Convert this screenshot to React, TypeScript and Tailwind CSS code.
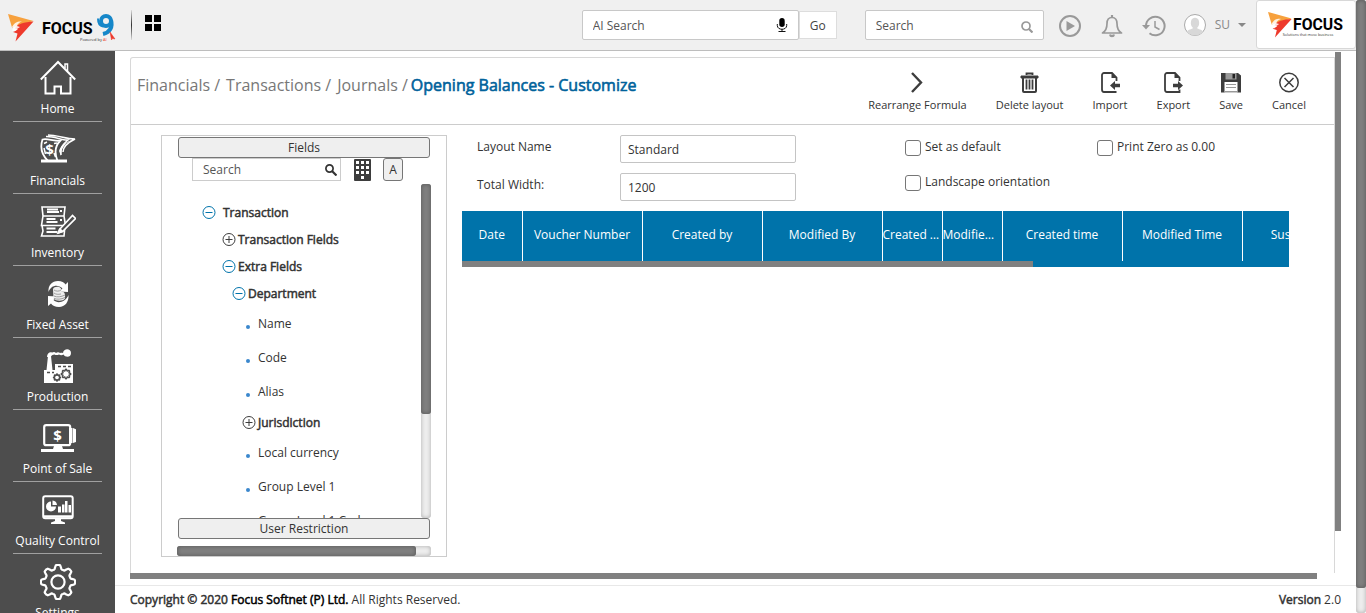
import type { ReactNode } from 'react';

function FocusMark() {
  return (
    <g>
      <path d="M0 1 25.500 8 4 14.500Z" fill="#f7a13d" />
      <path d="M25.500 8.500 7.500 28.500l2-8-4.500-1.500 5-2.500-3-1C9 11 16 9 25.500 8.500Z" fill="#ee3a2c" />
      <path d="M4 14c2.500-5 6-6 10-5.500-3 1-4.500 2.500-5 4.500l3 1-3 2-1.500 3-3.500-1.500 1.500-3Z" fill="#fff" fillOpacity=".85" />
      <path d="m6 18.500 5.500-2-1 4Z" fill="#ee3a2c" />
    </g>
  );
}

function Dollar({ x, y, size, fill }: { x: number; y: number; size: number; fill: string }) {
  return (
    <text x={x} y={y} fontSize={size} fontWeight="700" fill={fill} textAnchor="middle" fontFamily="Open Sans">
      $
    </text>
  );
}

function Gear({ cx, cy, r, depth, stroke, width, hole }: { cx: number; cy: number; r: number; depth: number; stroke: string; width: number; hole: number }) {
  const points: string[] = [];
  for (let i = 0; i <= 96; i++) {
    const a = (i / 96) * Math.PI * 2 - Math.PI / 2;
    const wave = Math.max(-1, Math.min(1, Math.cos(8 * (a + Math.PI / 2)) * 1.7));
    const d = r + wave * depth;
    points.push(`${(cx + Math.cos(a) * d).toFixed(2)},${(cy + Math.sin(a) * d).toFixed(2)}`);
  }
  return (
    <g fill="none" stroke={stroke} strokeWidth={width} strokeLinejoin="round">
      <polygon points={points.join(' ')} />
      <circle cx={cx} cy={cy} r={hole} />
    </g>
  );
}

const icons: Record<string, ReactNode> = {
  Home: (
    <g fill="none" stroke="#fff" strokeWidth="2">
      <path d="M.8 19.500 18 2l17.200 17.500" />
      <path d="M5.500 17v16.500h9V26.500h6.500v7h9.500V17" />
      <path d="M25 8V4h2.500v7" strokeWidth="1.500" />
    </g>
  ),
  Financials: (
    <g>
      <path d="M2.500 7.500C7 6 12 9 20 9c-5 5-6 11-2.500 20H8C1 22 0 15 2.500 7.500Z" fill="none" stroke="#fff" strokeWidth="1.800" />
      <Dollar x={9.5} y={22.5} size={15} fill="#fff" />
      <path d="M4 11.500 7 10M4 16l1.500 6M14 11.500l3-.5M14 21l1.500 4" fill="none" stroke="#fff" strokeWidth="1.500" />
      <path d="M6 4.500c8-.5 16 4 22 3.500-6 5-8 8-7 15M8 3c9 0 18 4 27 4-6 3-12 8-12 13" fill="none" stroke="#fff" strokeWidth="1.500" />
      <path d="M21 24c0-9 5-14 14-17-8 2-15 7-16 12Z" fill="#fff" />
      <path d="M1 29h26" stroke="#fff" strokeWidth="3" />
    </g>
  ),
  Inventory: (
    <g fill="none" stroke="#fff" strokeWidth="1.600">
      <path d="M2 3h23l-1 9H3Zm1 9h21l1.500 9.500H1.500Zm-1 9.500h23L24 32H1.500l1.500-5Z" />
      <path d="M7 5.500h11M7 8h12M6.500 15h9M6.500 18h11M6.500 24.500h9M6.500 28h11" strokeWidth="2" />
      <path d="M20 7h2M20 16h2" strokeWidth="2" />
      <path d="m19.500 25.500 13-14 3 3-13 13-4 1.500Z" fill="#4d4d4d" />
      <path d="m18 29 2-4 2.500 2.500Z" fill="#fff" />
    </g>
  ),
  'Fixed Asset': (
    <g>
      <path d="M8.500 16C8 9 12 5 18 5c4 0 6 1.500 7.500 3.500L28 6v10l-9-.5 3.500-3C18 8 11 9 8.500 16Z" fill="#fff" />
      <path d="M28.500 19C29 26 25 31 19 31c-4 0-6.500-1.500-8-3.500L8 30V20l9 .5-3.500 3.500c4 4 11.500 2.500 15-5Z" fill="#fff" />
      <path d="M13 13c1-3 7-3 8-.5l.5 3c3 .5 4 2 3.500 7-2 3-9 3-11.500 0Z" fill="#eee" />
      <path d="M14 14c2 1.500 5 1.500 7 0m-7 3c2 1.500 4 1.500 7 1m-7 2c3 1.500 7 1 11-1m-11 3.500c3 1 7 1 11-1" fill="none" stroke="#8a8a8a" strokeWidth=".8" />
    </g>
  ),
  Production: (
    <g>
      <path d="M4 35V22h2.500L8 8h3l1.500 14H15v-6h18v19Z" fill="#fff" />
      <path d="M7 9c0-4 3-5.500 5-4.500 2-1 3-.5 4 .5 1-1 3-1 4 0 1-.5 2-.5 3 0 .5-5 8-5 8 0s-6 4.500-7.500 1.500c-1.500 1-3 1-4.500 0-2 1-3.500.5-4.500 0C13 7 12 6.500 10.500 9Z" fill="#fff" />
      <path d="M18 18.500h3m2 0h3m2 0h3M7 24.500h3m2 0h2" stroke="#4d4d4d" strokeWidth="1.500" />
      <Gear cx={26} cy={26} r={4} depth={0.7} stroke="#4d4d4d" width={1.4} hole={0} />
      <Gear cx={17} cy={29.5} r={2.9} depth={0.6} stroke="#4d4d4d" width={1.3} hole={0} />
    </g>
  ),
  'Point of Sale': (
    <g>
      <rect x="4.200" y="5.200" width="26" height="20" rx="2" fill="none" stroke="#fff" strokeWidth="2.200" />
      <path d="M29 8h4l4 1.500v12L33 23h-4Z" fill="#fff" />
      <path d="M32.500 8v15" stroke="#4d4d4d" strokeWidth=".5" />
      <Dollar x={17.5} y={20.5} size={15} fill="#fff" />
      <path d="M14 26h8l1 3h11v3H1v-3h12Z" fill="#fff" />
    </g>
  ),
  'Quality Control': (
    <g>
      <rect x="3.200" y="4.200" width="29.500" height="22" rx="2" fill="none" stroke="#fff" strokeWidth="2" />
      <path d="M4 24.500h28" stroke="#fff" strokeWidth="2.500" />
      <path d="M11 9.500a5 5 0 1 0 5 5h-5Z" fill="#fff" />
      <path d="M12.500 8.500a5 5 0 0 1 4.500 4.500h-4.500Z" fill="#fff" />
      <path d="M18 20.500v-6h3v6Zm4 0v-8h2.500v8Zm3 0V9h2.500v11.500Zm3.500 0V13H31v7.500Z" fill="#fff" />
      <path d="M15 27h6v2l4 1.500V32H11v-1.500l4-1.500Z" fill="#fff" />
    </g>
  ),
  Settings: <Gear cx={18} cy={18} r={15} depth={2.1} stroke="#fff" width={2.2} hole={6.6} />,
};

const toolbar: { label: string; icon: ReactNode }[] = [
  { label: 'Rearrange Formula', icon: <path d="m6 2 9 9.500L6 21" fill="none" stroke="#3d3d3d" strokeWidth="2.400" /> },
  {
    label: 'Delete layout',
    icon: (
      <g fill="none" stroke="#3d3d3d">
        <path d="M7.500 4V2.500h6V4" strokeWidth="1.800" />
        <path d="M2 5h17v2H2Z" strokeWidth="1" fill="#3d3d3d" />
        <path d="M4 7v13c0 .6.400 1 1 1h11c.6 0 1-.4 1-1V7" strokeWidth="2" />
        <path d="M7.500 8.500v10m3-10v10m3-10v10" strokeWidth="1.800" />
      </g>
    ),
  },
  {
    label: 'Import',
    icon: (
      <g>
        <path d="M17.500 10V6.500L13 2H5C4 2 3 3 3 4v14.500C3 20 4 21 5 21h12.500" fill="none" stroke="#3d3d3d" strokeWidth="1.800" />
        <path d="M12.500 1.500V7h5.500ZM11 14.500l5-4.500v2.700h5v3.600h-5V19Z" fill="#3d3d3d" />
      </g>
    ),
  },
  {
    label: 'Export',
    icon: (
      <g>
        <path d="M17.500 10V6.500L13 2H5C4 2 3 3 3 4v14.500C3 20 4 21 5 21h12.500v-2.500" fill="none" stroke="#3d3d3d" strokeWidth="1.800" />
        <path d="M12.500 1.500V7h5.500ZM21 14.500 16 10v2.700h-5v3.600h5V19Z" fill="#3d3d3d" />
      </g>
    ),
  },
  {
    label: 'Save',
    icon: (
      <g>
        <path d="M1 2h17l3 2.500V21.500H1Z" fill="#3d3d3d" />
        <path d="M5.500 2h11v6.500h-11Z" fill="#9a9a9a" />
        <path d="M12.500 3h2.500v4.500h-2.500Z" fill="#222" />
        <path d="M4.500 11h13v10.500h-13Z" fill="#fff" />
        <path d="M6 13.500h10M6 16.500h10M4.500 20.500h13" stroke="#999" />
      </g>
    ),
  },
  {
    label: 'Cancel',
    icon: (
      <g fill="none" stroke="#3d3d3d" strokeWidth="1.500">
        <circle cx="11" cy="11.500" r="9.200" />
        <path d="m6.500 7 9 9m0-9-9 9" />
      </g>
    ),
  },
];

type TreeNode = { label: string; kind: 'open' | 'closed' | 'leaf'; indent: string };

const tree: TreeNode[] = [
  { label: 'Transaction', kind: 'open', indent: 'pl-[25px] gap-[7px]' },
  { label: 'Transaction Fields', kind: 'closed', indent: 'pl-[45px] gap-[2px]' },
  { label: 'Extra Fields', kind: 'open', indent: 'pl-[45px] gap-[2px]' },
  { label: 'Department', kind: 'open', indent: 'pl-[55px] gap-[2px]' },
  { label: 'Name', kind: 'leaf', indent: '' },
  { label: 'Code', kind: 'leaf', indent: '' },
  { label: 'Alias', kind: 'leaf', indent: '' },
  { label: 'Jurisdiction', kind: 'closed', indent: 'pl-[65px] gap-[2px]' },
  { label: 'Local currency', kind: 'leaf', indent: '' },
  { label: 'Group Level 1', kind: 'leaf', indent: '' },
  { label: 'Group Level 1 Code', kind: 'leaf', indent: '' },
];

const columns: [string, string][] = [
  ['Date', 'w-[60px]'],
  ['Voucher Number', 'w-[120px]'],
  ['Created by', 'w-[120px]'],
  ['Modified By', 'w-[120px]'],
  ['Created Date', 'w-[60px] pr-[2px]'],
  ['Modified Date', 'w-[60px] pr-[2px]'],
  ['Created time', 'w-[120px]'],
  ['Modified Time', 'w-[120px]'],
  ['Suspended', 'w-[120px]'],
];

function Header() {
  return (
    <header className="flex h-[51px] shrink-0 items-start border-b border-[#bdbdbd] bg-[#f0f0f0]">
      <a href="#home" className="pt-[13px] pl-2" aria-label="Focus 9">
        <svg viewBox="0 0 110 30" className="h-[30px] w-[110px]" aria-hidden="true">
          <FocusMark />
          <text x="34" y="21" fontSize="16" fontWeight="700" fontFamily="Roboto" fill="#000">FOCUS</text>
          <g fill="none" stroke="#1687c9">
            <circle cx="98" cy="8" r="5" strokeWidth="4" />
            <path d="M103 7c2 7-1 12.500-8 14" strokeWidth="4" />
            <path d="M90 5.500c0 5 2 7.500 5 8" strokeWidth="2" />
          </g>
          <path d="m102 19 5 7-2.500-.5-1 1.500Z" fill="#ee3a2c" stroke="#ee3a2c" strokeWidth=".5" />
          <text x="72" y="28" fontSize="4" fontFamily="Open Sans" fill="#333">
            Powered by <tspan fill="#ee3a2c">AI</tspan>
          </text>
        </svg>
      </a>
      <div className="mt-[10px] ml-[13px] h-[30px] w-px shrink-0 bg-linear-to-b from-[#ddd] via-[#333] to-[#ddd]" />
      <button type="button" aria-label="Apps" className="mt-[15px] ml-[13px]">
        <svg viewBox="0 0 16 16" className="size-4">
          <path d="M0 0h7v7H0Zm9 0h7v7H9ZM0 9h7v7H0Zm9 0h7v7H9Z" />
        </svg>
      </button>

      <div className="ml-auto flex items-center pt-[10px]">
        <div className="flex h-[30px] w-[217px] items-center rounded-[2px] border border-[#c8c8c8] bg-white px-[10px]">
          <input aria-label="AI Search" placeholder="AI Search" className="min-w-0 flex-1 pt-px outline-none placeholder:text-[#555]" />
          <svg viewBox="0 0 12 16" className="h-4 w-3" aria-hidden="true">
            <rect x="3.300" y="1" width="5.400" height="9" rx="2.700" />
            <path d="M1.300 7v1.500c0 5 9.400 5 9.400 0V7M6 12v2.500M2.500 14.500h7" fill="none" stroke="#111" />
          </svg>
        </div>
        <button type="button" className="h-7 w-[38px] border border-[#ddd] bg-white pt-px text-[#444]">Go</button>
      </div>
      <div className="mt-[10px] ml-7 flex h-[30px] w-[179px] items-center rounded-[2px] border border-[#c8c8c8] bg-white px-[10px]">
        <input aria-label="Search" placeholder="Search" className="min-w-0 flex-1 pt-px outline-none placeholder:text-[#555]" />
        <svg viewBox="0 0 12 12" className="mt-[3px] size-3" fill="none" stroke="#999" aria-hidden="true">
          <circle cx="5" cy="5" r="4" strokeWidth="1.700" />
          <path d="m8 8 3.500 3.500" strokeWidth="2.200" />
        </svg>
      </div>
      <div className="flex items-center gap-[18px] pt-[14px] pl-[14px]">
        <button type="button" aria-label="Play">
          <svg viewBox="0 0 24 24" className="size-6">
            <circle cx="12" cy="12" r="10" fill="none" stroke="#999" strokeWidth="2" />
            <path d="M8.500 7v10l8.500-5Z" fill="#999" />
          </svg>
        </button>
        <button type="button" aria-label="Notifications">
          <svg viewBox="0 0 24 24" className="size-6" fill="none" stroke="#999" strokeWidth="1.700">
            <path d="M12 3.500c-3.500 0-5 2.500-5 6 0 5-1 7.500-4.500 9.500h19c-3.500-2-4.500-4.500-4.500-9.500 0-3.500-1.500-6-5-6Z" strokeLinejoin="round" />
            <path d="M12 1v2.500M10 20.500c.5 2.200 3.500 2.200 4 0" strokeWidth="2.200" />
          </svg>
        </button>
        <button type="button" aria-label="History">
          <svg viewBox="0 0 24 24" className="size-6" fill="none" stroke="#999" strokeWidth="2">
            <path d="M4 12a9.300 9.300 0 1 1 3.500 7.300" />
            <path d="M13 7v6l4.500 2.500" strokeWidth="1.500" />
            <path d="M0 11h8l-4 4.500Z" fill="#999" stroke="none" />
          </svg>
        </button>
      </div>
      <button type="button" className="mt-[13px] ml-[17px] flex items-center text-[#888]">
        <svg viewBox="0 0 24 24" className="size-6" aria-hidden="true">
          <circle cx="12" cy="12" r="10.500" fill="#fff" stroke="#aaa" />
          <path d="M4 19c1-3 5-2.500 6-4-2-2-2.500-4-2-6.500.5-5 7.500-5 8 0 .5 2.500 0 4.500-2 6.500 1 1.500 5 1 6 4-4 4.500-12 4.500-16 0Z" fill="#d8d8d8" />
        </svg>
        <span className="ml-2">SU</span>
        <span className="ml-2 border-x-4 border-t-4 border-x-transparent border-t-[#888]" />
      </button>
      <a href="#focus" aria-label="Focus Softnet" className="ml-[10px] flex h-[49px] w-[100px] shrink-0 items-center justify-center rounded-[3px] border border-[#d8d8d8] bg-white">
        <svg viewBox="0 0 82 30" className="h-[28px] w-[76px]" aria-hidden="true">
          <FocusMark />
          <text x="27" y="20" fontSize="17" fontWeight="700" fontFamily="Roboto" fill="#000">FOCUS</text>
          <text x="16" y="27" fontSize="4" fontFamily="Open Sans" fill="#333">Solutions that move business</text>
        </svg>
      </a>
    </header>
  );
}

function Sidebar() {
  return (
    <nav className="w-[115px] shrink-0 overflow-hidden bg-[#4d4d4d] px-[13px] text-white">
      {Object.keys(icons).map((label) => (
        <a key={label} href="#menu" className="flex h-[72px] flex-col items-center pt-[9px] whitespace-nowrap">
          <svg viewBox="0 0 36 36" className="size-9 shrink-0" aria-hidden="true">{icons[label]}</svg>
          <span className="mt-1 leading-[18px]">{label}</span>
          <span className="mt-[3px] h-px w-[89px] shrink-0 bg-[#a0a0a0]" />
        </a>
      ))}
    </nav>
  );
}

function FieldsPanel() {
  return (
    <section className="flex h-[422px] w-[286px] shrink-0 flex-col border border-[#ccc] px-[15px]">
      <button type="button" className="mx-px mt-px h-[21px] shrink-0 rounded-[3px] border border-[#767676] bg-[#efefef] leading-[18px]">Fields</button>
      <div className="flex h-[26px] shrink-0 items-start pl-[15px]">
        <div className="flex h-[23px] w-[149px] items-center border border-[#ccc] pr-[3px] pl-[10px]">
          <input aria-label="Search fields" placeholder="Search" className="min-w-0 flex-1 outline-none placeholder:text-[#555]" />
          <svg viewBox="0 0 12 12" className="size-3" fill="none" stroke="#333" aria-hidden="true">
            <circle cx="4.500" cy="4.500" r="3.600" strokeWidth="1.700" />
            <path d="m7 7 4.500 4.500" strokeWidth="2.200" />
          </svg>
        </div>
        <button type="button" aria-label="Keypad" className="mt-px ml-[13px]">
          <svg viewBox="0 0 17 22" className="h-[22px] w-[17px]">
            <rect width="17" height="22" rx="1" fill="#3d3d3d" />
            <path d="M2 2h3v3H2Zm5 0h3v3H7Zm5 0h3v3h-3ZM2 7h3v3H2Zm5 0h3v3H7Zm5 0h3v3h-3ZM2 12h3v3H2Zm5 0h3v3H7Zm5 0h3v3h-3ZM7 17h3v3H7Z" fill="#fff" />
          </svg>
        </button>
        <button type="button" className="ml-3 h-[23px] w-5 rounded-[3px] border border-[#767676] bg-[#efefef]">A</button>
      </div>
      <div className="flex min-h-0 flex-1">
        <ul className="min-w-0 flex-1 overflow-hidden pt-[15px]">
          {tree.map((node) =>
            node.kind === 'leaf' ? (
              <li key={node.label} className="flex h-[34px] items-center gap-2 pl-[69px]">
                <span className="mt-[5px] size-1 rounded-full bg-[#3a87cd]" />
                {node.label}
              </li>
            ) : (
              <li key={node.label} className={`flex h-[27px] items-center [-webkit-text-stroke:0.5px_#333] ${node.indent}`}>
                <svg viewBox="0 0 14 14" className={node.kind === 'open' ? 'size-[14px] text-[#0073aa]' : 'size-[14px] text-[#3d3d3d]'} fill="none" stroke="currentColor" aria-hidden="true">
                  <circle cx="7" cy="6.500" r="6" />
                  <path d={node.kind === 'open' ? 'M3.500 6.500h7' : 'M3.500 6.500h7M7 3v7'} />
                </svg>
                {node.label}
              </li>
            ),
          )}
        </ul>
        <div className="w-[10px] rounded-[3px] bg-[#eee] shadow-[inset_0_0_4px_#aaa]">
          <div className="h-[69%] rounded-[3px] bg-[#808080] shadow-[inset_0_0_4px_#555]" />
        </div>
      </div>
      <button type="button" className="mx-px h-[21px] shrink-0 rounded-[3px] border border-[#767676] bg-[#efefef] leading-[18px]">User Restriction</button>
      <div className="mt-[7px] h-[10px] shrink-0 rounded-[3px] bg-[#eee] shadow-[inset_0_0_4px_#aaa]">
        <div className="h-full w-[94%] rounded-[3px] bg-[#808080] shadow-[inset_0_0_4px_#555]" />
      </div>
    </section>
  );
}

function CheckBox({ label }: { label: string }) {
  return (
    <label className="flex items-center gap-1 leading-[18px] whitespace-nowrap">
      <input type="checkbox" className="mt-[2px] size-4 appearance-none rounded-[3px] border border-[#767676] bg-white" />
      {label}
    </label>
  );
}

function LayoutEditor() {
  return (
    <section className="min-w-0 flex-1">
      <div className="grid grid-cols-[443px_192px_1fr]">
        <div className="grid grid-cols-[143px_176px] gap-y-[10px] pl-[15px]">
          <label htmlFor="layout-name" className="pt-[2px] leading-[20px]">Layout Name</label>
          <input id="layout-name" defaultValue="Standard" className="h-7 rounded-[2px] border border-[#c4c4c4] px-[7px]" />
          <label htmlFor="total-width" className="pt-[2px] leading-[20px]">Total Width:</label>
          <input id="total-width" defaultValue="1200" className="h-7 rounded-[2px] border border-[#c4c4c4] px-[7px]" />
        </div>
        <div className="flex flex-col gap-[17px] pt-[3px]">
          <CheckBox label="Set as default" />
          <CheckBox label="Landscape orientation" />
        </div>
        <div className="pt-[3px]">
          <CheckBox label="Print Zero as 0.00" />
        </div>
      </div>
      <div className="mt-[10px] h-14 overflow-hidden bg-[#0073aa]">
        <table className="w-[900px] table-fixed border-collapse text-white">
          <thead>
            <tr className="h-[50px]">
              {columns.map(([name, width]) => (
                <th key={name} className={`overflow-hidden border-r border-white pb-[2px] font-normal text-ellipsis whitespace-nowrap ${width}`}>
                  {name}
                </th>
              ))}
            </tr>
          </thead>
        </table>
        <div className="h-[6px] w-[69%] bg-[#808080]" />
      </div>
    </section>
  );
}

export default function App() {
  return (
    <div className="flex h-screen overflow-hidden bg-white font-['Open_Sans',sans-serif] text-[12px] text-[#333]">
      <div className="flex min-w-0 flex-1 flex-col">
        <Header />
        <div className="flex min-h-0 flex-1">
          <Sidebar />
          <main className="flex min-w-0 flex-1 flex-col">
            <div className="mx-[15px] flex min-h-0 flex-1 flex-col">
              <div className="flex min-h-0 flex-1">
                <div className="mt-[6px] flex min-w-0 flex-1 flex-col rounded-tl-[3px] border-x border-t border-[#d8d8d8]">
                  <div className="flex h-[67px] shrink-0 justify-between border-b border-[#ccc] pr-[28px] pl-[6px]">
                    <h1 className="flex gap-[6px] pt-[15px] text-[16px] leading-[24px] whitespace-nowrap text-[#777]">
                      <span>Financials /</span>
                      <span>Transactions /</span>
                      <span>Journals /</span>
                      <span className="-ml-[3px] text-[#00629b] [-webkit-text-stroke:0.6px_#00629b]">Opening Balances - Customize</span>
                    </h1>
                    <div className="flex items-start gap-[29px] pt-[13px]">
                      {toolbar.map(({ label, icon }) => (
                        <button key={label} type="button" className="flex flex-col items-center text-[11px] leading-[16px] whitespace-nowrap">
                          <svg viewBox="0 0 22 23" className="mb-[3px] h-[23px] w-[22px]" aria-hidden="true">{icon}</svg>
                          {label}
                        </button>
                      ))}
                    </div>
                  </div>
                  <div className="flex gap-[15px] pt-[10px] pr-[45px] pl-[30px]">
                    <FieldsPanel />
                    <LayoutEditor />
                  </div>
                </div>
                <div className="w-[6px] pt-px">
                  <div className="h-[92%] bg-[#808080]" />
                </div>
              </div>
              <div className="mb-[6px] h-[6px] shrink-0">
                <div className="h-full w-[98%] bg-[#808080]" />
              </div>
            </div>
            <footer className="flex h-7 shrink-0 items-center justify-between border-t border-[#e8e8e8] px-[15px]">
              <p>
                <span className="[-webkit-text-stroke:0.5px_#333]">Copyright © 2020 </span>
                <span className="text-black [-webkit-text-stroke:0.5px_#000]">Focus Softnet (P) Ltd.</span> All Rights Reserved.
              </p>
              <p><span className="[-webkit-text-stroke:0.5px_#333]">Version</span> 2.0</p>
            </footer>
          </main>
        </div>
      </div>
      <div className="w-[10px] shrink-0 rounded-[3px] bg-[#eee] shadow-[inset_0_0_4px_#aaa]">
        <div className="h-[96%] rounded-[3px] bg-[#808080] shadow-[inset_0_0_4px_#555]" />
      </div>
    </div>
  );
}
